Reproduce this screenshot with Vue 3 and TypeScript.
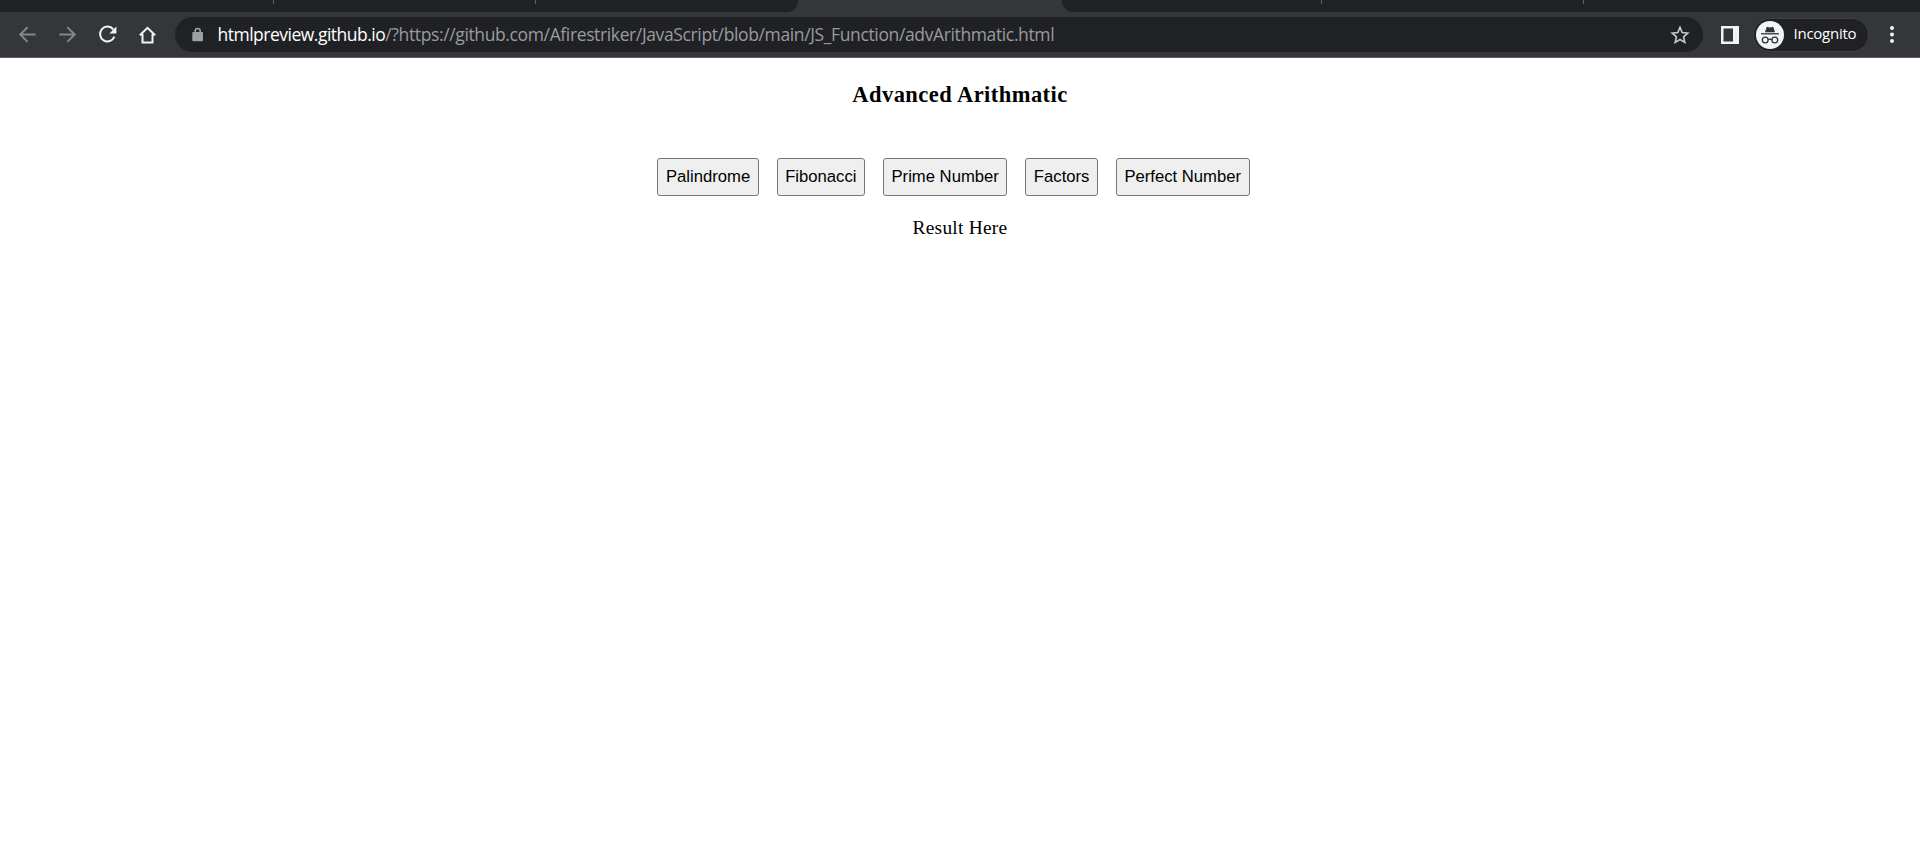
<script setup lang="ts">
import { ref } from 'vue'

const operations: string[] = ['Palindrome', 'Fibonacci', 'Prime Number', 'Factors', 'Perfect Number']
const result = ref<string>('Result Here')
</script>

<template>
  <div class="window">
    <header class="chrome">
      <div class="tabs">
        <div class="tab-group left">
          <span class="tab first"></span>
          <span class="tab"></span>
          <span class="tab last"></span>
        </div>
        <div class="tab-group right">
          <span class="tab after-active"></span>
          <span class="tab"></span>
        </div>
      </div>
      <div class="toolbar">
        <nav class="nav">
          <svg class="icon dim" viewBox="0 0 20 20"><path d="M17.6 9.5H2.6M9.6 2.1 2.2 9.5l7.4 7.4" /></svg>
          <svg class="icon dim" viewBox="0 0 20 20"><path d="M1.3 9.5H16.3M9.3 2.1 16.7 9.5l-7.4 7.4" /></svg>
          <svg class="icon" viewBox="0 0 20 20">
            <path class="arc" d="M15.3 4.4A7.4 7.4 0 1 0 16.4 11.6" />
            <path class="solid" d="M18.4 1.4v7h-7z" />
          </svg>
          <svg class="icon" viewBox="0 0 20 20"><path class="home" d="M1.9 10.3 9.5 2.9l7.6 7.4M4.5 9v8.5h10V9" /></svg>
        </nav>
        <div class="omnibox">
          <svg class="lock" viewBox="0 0 12 16">
            <path d="M3.2 6.5V4a2.5 2.5 0 0 1 5 0v2.5" />
            <rect x="0.3" y="5" width="10.7" height="9.3" rx="1" />
          </svg>
          <span class="url"><span class="host">htmlpreview.github.io</span><span class="path">/?https://github.com/Afirestriker/JavaScript/blob/main/JS_Function/advArithmatic.html</span></span>
          <svg class="star" viewBox="0 0 20 20">
            <path d="m10 2.4 2.2 5.2 5.6.5-4.2 3.8 1.2 5.5L10 14.5l-4.8 2.9 1.2-5.5-4.2-3.8 5.6-.5z" />
          </svg>
        </div>
        <svg class="panel" viewBox="0 0 18 18">
          <path fill-rule="evenodd" d="M0 0h18v18H0zM2.5 2.5v13H12v-13z" />
        </svg>
        <div class="profile">
          <svg class="avatar" viewBox="0 0 28 28">
            <circle class="disc" cx="14" cy="14" r="14" />
            <path class="hat" d="M9 11.3 10.5 6.4q.3-.8 1.2-.5l2.3.7 2.3-.7q.9-.3 1.2.5L19 11.3z" />
            <path class="brim" d="M5 12.8h18" />
            <circle class="lens" cx="9.2" cy="19" r="2.9" />
            <circle class="lens" cx="18.8" cy="19" r="2.9" />
            <path class="bridge" d="M12.1 18.6q1.9-1 3.8 0" />
          </svg>
          <span class="label">Incognito</span>
        </div>
        <svg class="menu" viewBox="0 0 6 18">
          <circle cx="3" cy="2.1" r="2" /><circle cx="3" cy="8.5" r="2" /><circle cx="3" cy="14.9" r="2" />
        </svg>
      </div>
    </header>
    <main class="page">
      <h3>Advanced Arithmatic</h3>
      <div class="buttons">
        <button v-for="name in operations" :key="name" type="button">{{ name }}</button>
      </div>
      <p class="result">{{ result }}</p>
    </main>
  </div>
</template>

<style>
body {
  margin: 0;
  background: #fff;
}
</style>

<style scoped>
.window {
  height: 846px;
  overflow: hidden;
  background: #fff;
}
.chrome {
  height: 58px;
  box-sizing: border-box;
  background: #35363a;
  border-bottom: 1px solid #5b5c60;
}
.tabs {
  height: 12px;
  display: flex;
  justify-content: space-between;
}
.tab-group {
  display: flex;
  background: #202124;
}
.left {
  width: 798px;
  border-bottom-right-radius: 11px;
}
.right {
  width: 858px;
  border-bottom-left-radius: 11px;
}
.tab {
  box-sizing: border-box;
  width: 262px;
  height: 4px;
  border-right: 1px solid #606165;
}
.tab.first {
  width: 274px;
}
.tab.last {
  border: 0;
}
.tab.after-active {
  width: 260px;
}
.toolbar {
  height: 45px;
  display: flex;
  align-items: center;
}
.nav {
  width: 157px;
  margin-left: 18px;
  display: flex;
  gap: 20px;
}
.icon {
  width: 20px;
  height: 20px;
  flex: none;
  fill: none;
  stroke: #f1f3f4;
  stroke-width: 2;
}
.dim {
  stroke: #85868a;
}
.solid {
  fill: #f1f3f4;
  stroke: none;
}
.omnibox {
  box-sizing: border-box;
  width: 1528px;
  height: 35px;
  padding: 0 13px 0 16px;
  border-radius: 18px;
  background: #202124;
  display: flex;
  align-items: center;
}
.lock {
  width: 12px;
  height: 16px;
  margin-left: 1px;
  fill: #9aa0a6;
}
.lock path {
  fill: none;
  stroke: #9aa0a6;
  stroke-width: 1.6;
}
.url {
  margin-left: 13.5px;
  padding-bottom: 1px;
  flex: 1;
  font: 17.5px/24px "Open Sans", "Noto Sans", sans-serif;
  white-space: nowrap;
}
.host {
  color: #fff;
  letter-spacing: -0.5px;
}
.path {
  color: #9a9b9d;
  letter-spacing: -0.37px;
}
.star {
  width: 20px;
  height: 20px;
  fill: none;
  stroke: #c6c8ca;
  stroke-width: 1.6;
}
.panel {
  width: 18px;
  height: 18px;
  margin-left: 18px;
  fill: #f1f3f4;
}
.profile {
  box-sizing: border-box;
  width: 116px;
  height: 34px;
  margin-left: 14px;
  padding-left: 2px;
  border: 1px solid #3f4044;
  border-radius: 17px;
  background: #202124;
  display: flex;
  align-items: center;
}
.avatar {
  width: 28px;
  height: 28px;
}
.disc {
  fill: #f1f3f4;
}
.hat {
  fill: #303134;
}
.brim,
.lens,
.bridge {
  fill: none;
  stroke: #303134;
  stroke-width: 1.3;
}
.label {
  margin-left: 9.5px;
  padding-bottom: 3px;
  color: #fff;
  font: 15px/20px "Open Sans", "Noto Sans", sans-serif;
  letter-spacing: -0.25px;
}
.menu {
  width: 6px;
  height: 18px;
  margin-left: 20px;
  fill: #f1f3f4;
}
.page {
  display: flex;
  flex-direction: column;
  align-items: center;
  color: #000;
}
h3 {
  margin: 23px 0 0;
  font: bold 22.5px/27px "Liberation Serif", serif;
  letter-spacing: 0.45px;
}
.buttons {
  display: flex;
  gap: 18px;
  margin: 50px 13px 0 0;
}
button {
  height: 38px;
  box-sizing: border-box;
  padding: 0 7.5px;
  border: 1px solid #767676;
  border-radius: 3px;
  background: #efefef;
  color: #000;
  font: 16.667px/20px "Liberation Sans", Arial, sans-serif;
}
.result {
  margin: 20px 0 0;
  font: 19.4px/23px "Liberation Serif", serif;
  letter-spacing: 0.25px;
}
</style>
